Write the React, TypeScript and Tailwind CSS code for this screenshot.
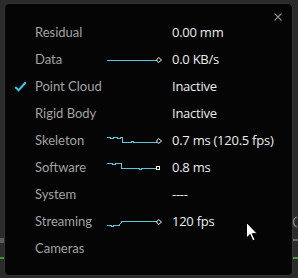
import React from "react";

const CYAN = "#5cc8dc";

function Spark({ d, marker }: { d: string; marker: "diamond" | "square" }) {
  return (
    <svg width="55" height="14" viewBox="0 0 55 14" className="block">
      <path d={d} fill="none" stroke={CYAN} strokeWidth="1" shapeRendering="crispEdges" />
      {marker === "diamond" ? (
        <path d="M51.5 4.5 L54.5 7 L51.5 9.5 L49.5 7 Z" fill="none" stroke="#e8f4f6" strokeWidth="1" />
      ) : (
        <rect x="49.5" y="5.5" width="3" height="3" fill="none" stroke="#e8f4f6" strokeWidth="1" />
      )}
    </svg>
  );
}

type Row = {
  label: string;
  value: string;
  check?: boolean;
  spark?: { d: string; marker: "diamond" | "square" };
};

const rows: Row[] = [
  { label: "Residual", value: "0.00 mm" },
  { label: "Data", value: "0.0 KB/s", spark: { d: "M0 7.5 H50", marker: "diamond" } },
  { label: "Point Cloud", value: "Inactive", check: true },
  { label: "Rigid Body", value: "Inactive" },
  {
    label: "Skeleton",
    value: "0.7 ms (120.5 fps)",
    spark: { d: "M0 3.5 H3 L4 4.5 H6 L7 3.5 H10 L11 4.5 H13 L14 3.5 H15 V8.5 H24 L25 7.5 H26 L27 8.5 H50", marker: "diamond" },
  },
  {
    label: "Software",
    value: "0.8 ms",
    spark: { d: "M0 2.5 H5 L6 3.5 H8 L9 2.5 H14 V7.5 H32 L33 8.5 H34 L35 7.5 H50", marker: "square" },
  },
  { label: "System", value: "----" },
  {
    label: "Streaming",
    value: "120 fps",
    spark: { d: "M0 10.5 H4 L5 11.5 H6 L7 10.5 H12 L15 6.5 H50", marker: "diamond" },
  },
  { label: "Cameras", value: "" },
];

export default function App() {
  return (
    <div className="relative w-[298px] h-[278px] bg-[#2b2b2b] overflow-hidden">
      {/* background bits peeking around the panel */}
      <div className="absolute left-0 top-[238px] w-[6px] h-[5px] bg-[#5a5a5a]" />
      <div className="absolute left-0 top-[257px] w-[6px] h-[2px] bg-[#3f9a3a]" />
      <div className="absolute left-[292px] top-[239px] w-[6px] h-[2px] bg-[#6a6a6a]" />
      <div className="absolute left-[292px] top-[257px] w-[6px] h-[2px] bg-[#3f9a3a]" />
      <svg className="absolute left-[292px] top-[216px]" width="6" height="12" viewBox="0 0 6 12">
        <path d="M5 1 Q1.5 2 1.5 6 Q1.5 10 5 11" fill="none" stroke="#8a8a8a" strokeWidth="1.3" />
      </svg>

      <div className="absolute left-[4px] top-[3px] w-[289px] h-[273px] rounded-[5px] bg-[#050505] border border-[#333333]">
        <div className="relative pt-[15px]">
          <svg className="absolute left-[269px] top-[9px]" width="8" height="8" viewBox="0 0 8 8">
            <path d="M0.5 0.5 L7.5 7.5 M7.5 0.5 L0.5 7.5" stroke="#8a8a8a" strokeWidth="1.1" />
          </svg>
          {rows.map((r) => (
            <div key={r.label} className="flex items-center h-[27px] pl-[9px]">
              <div className="w-[21px] flex items-center">
                {r.check && (
                  <svg width="13" height="11" viewBox="0 0 13 11">
                    <path d="M1.2 6 L4.6 9.2 L11.8 1.2" fill="none" stroke="#3fbfe6" strokeWidth="2.2" />
                  </svg>
                )}
              </div>
              <div
                className="w-[72px] text-[13px] text-[#a3a3a3] whitespace-nowrap"
                style={{ fontFamily: "Lato, sans-serif" }}
              >
                {r.label}
              </div>
              <div className="w-[55px] flex items-center">
                {r.spark && <Spark d={r.spark.d} marker={r.spark.marker} />}
              </div>
              <div
                className="pl-[10px] text-[13px] tracking-[-0.25px] text-[#ececec] whitespace-nowrap"
                style={{ fontFamily: "'Open Sans', sans-serif" }}
              >
                {r.value}
              </div>
            </div>
          ))}
        </div>
      </div>

      {/* mouse cursor */}
      <svg className="absolute left-[246px] top-[222px]" width="13" height="20" viewBox="0 0 13 20">
        <path d="M0.5 0.5 V16 L4 12.5 L6.8 18.8 L9 17.8 L6.3 11.7 H11.3 Z" fill="#ffffff" stroke="#000000" strokeWidth="1" />
      </svg>
    </div>
  );
}
